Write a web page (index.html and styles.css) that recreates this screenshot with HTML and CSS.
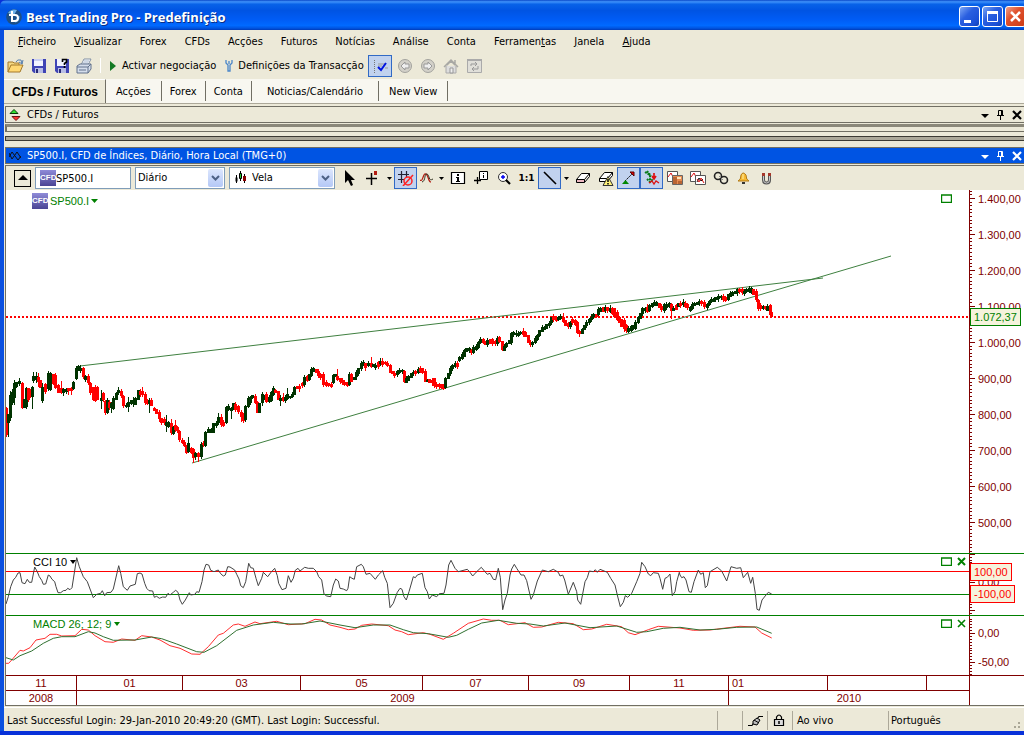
FILE: index.html
```html
<!DOCTYPE html>
<html lang="pt">
<head>
<meta charset="utf-8">
<title>Best Trading Pro - Predefinição</title>
<link rel="stylesheet" href="styles.css">
</head>
<body>
<div class="window">
  <header class="titlebar">
    <svg class="app-icon" viewBox="0 0 16 16" width="16" height="16"><circle cx="8" cy="8" r="7.8" fill="#1d4f86"/><path d="M2 4a7.800 7.800 0 0 1 9-3L8 6Z" fill="#6fb2e8"/><path d="M9 14q5-2 5-7l-3 1Z" fill="#3f8fd6"/><path d="M6 2v10h3a3 3 0 0 0 0-6H3" fill="none" stroke="#fff" stroke-width="2"/></svg>
    <h1 class="title">Best Trading Pro - Predefinição</h1>
    <div class="window-buttons">
      <button class="wbtn" aria-label="Minimizar"><svg width="19" height="19"><path d="M4 13h7v3H4z" fill="#fff"/></svg></button>
      <button class="wbtn" aria-label="Maximizar"><svg width="19" height="19"><path d="M4.500 5.500h10v9h-10zM4 5h11" fill="none" stroke="#fff"/><path d="M4 4h11v3H4z" fill="#fff"/></svg></button>
      <button class="wbtn wbtn-close" aria-label="Fechar"><svg width="19" height="19"><path d="M5 5l9 9M14 5l-9 9" stroke="#fff" stroke-width="2.500"/></svg></button>
    </div>
  </header>
  <div class="frame">
    <nav class="menu">
      <button><u>F</u>icheiro</button><button><u>V</u>isualizar</button><button>Forex</button><button>CFDs</button><button>Acções</button><button>Futuros</button><button>Notícias</button><button>Análise</button><button>Conta</button><button>Ferramen<u>t</u>as</button><button><u>J</u>anela</button><button><u>A</u>juda</button>
    </nav>
    <div class="toolbar">
      <button class="tool" aria-label="Abrir"><svg width="17" height="16"><path d="M1 14V4h5l1 1h5v3" fill="#f5d982" stroke="#a4792a"/><path d="M1 14l3-7h12l-3 7Z" fill="#ffd873" stroke="#a4792a"/><path d="M9 4q1-3 5-2l1 4M12 4l3 2 1-4" fill="none" stroke="#567fae"/></svg></button>
      <button class="tool" aria-label="Guardar"><svg width="16" height="16"><path d="M1 1h14v14H3l-2-2Z" fill="#3f44b5"/><path d="M3 1h9v7H3z" fill="#f1f3ff"/><path d="M3 1h9v2H3z" fill="#c7cdf1"/><path d="M4 10h8v5H4z" fill="#b8bde5"/><path d="M5 11h2v4H5z" fill="#282b77"/></svg></button>
      <button class="tool" aria-label="Guardar como"><svg width="16" height="16"><path d="M1 1h14v14H3l-2-2Z" fill="#3f44b5"/><path d="M3 1h9v7H3z" fill="#f1f3ff"/><path d="M4 10h8v5H4z" fill="#b8bde5"/><path d="M5 11h2v4H5z" fill="#282b77"/><path d="M8.500 4V1.500h4V4L10.500 5.500V7M10.500 8v2" fill="none" stroke="#000" stroke-width="1.600"/></svg></button>
      <button class="tool" aria-label="Imprimir"><svg width="17" height="16"><path d="M5 7l3-6h7l-3 6" fill="#fff" stroke="#8291a5"/><path d="M8 3h5M7 5h5" stroke="#9cb0cb"/><path d="M1 8l3-2h11v5l-3 4H1Z" fill="#d4ddeb" stroke="#62728c"/><path d="M1 9h11l3-3M12 9v6M3 12h7" fill="none" stroke="#62728c"/></svg></button>
      <span class="separator"></span>
      <button class="command"><svg width="9" height="12"><path d="M1 1v10l6-5Z" fill="#147a24"/></svg>Activar negociação</button>
      <button class="command command-wide"><svg width="8" height="12"><path d="M1 0v3l2 2v6h2V5l2-2V0M4 1v3" fill="none" stroke="#4a86c9" stroke-width="1.300"/></svg>Definições da Transacção</button>
      <button class="toggle" aria-label="Confirmar" aria-pressed="true"><svg width="18" height="16"><path d="M3.500 2v13" stroke="#777" stroke-dasharray="1 1"/><path d="M7 6h8M7 8h4M14 10h3" stroke="#999"/><path d="M7 9l3 3 5-7" fill="none" stroke="#0014e0" stroke-width="2"/></svg></button>
      <button class="tool" aria-label="Anterior" disabled><svg width="16" height="16"><circle cx="8" cy="8" r="6.500" fill="#d2d0c8" stroke="#a3a39e"/><path d="M12 6H8V4L4 8l4 4v-2h4Z" fill="#eee" stroke="#999"/></svg></button>
      <button class="tool" aria-label="Seguinte" disabled><svg width="16" height="16"><circle cx="8" cy="8" r="6.500" fill="#d2d0c8" stroke="#a3a39e"/><path d="M4 6h4V4l4 4-4 4v-2H4Z" fill="#eee" stroke="#999"/></svg></button>
      <button class="tool" aria-label="Início" disabled><svg width="16" height="16"><path d="M3 8v7h10V8" fill="#ddd" stroke="#aaa"/><path d="M1 9l7-7 7 7M12 6V2M4 7l4-4 4 4" fill="none" stroke="#a8a8a4" stroke-width="1.500"/><path d="M7 10h3v5H7z" fill="#eee" stroke="#999"/></svg></button>
      <button class="tool" aria-label="Actualizar" disabled><svg width="17" height="16"><path d="M1.500 1.500h14v13h-14z" fill="#e0dfd9" stroke="#aaa"/><path d="M1 2h15" stroke="#aaa" stroke-width="2"/><path d="M5 8V6h6M9 4l2 2-2 2M12 8v3H6M8 9l-2 2 2 2" fill="none" stroke="#999"/></svg></button>
    </div>
    <nav class="tabs">
      <button class="tab tab-active" aria-current="page">CFDs / Futuros</button><button class="tab">Acções</button><button class="tab">Forex</button><button class="tab">Conta</button><button class="tab tab-wide">Noticias/Calendário</button><button class="tab">New View</button>
    </nav>
    <section class="pane-header">
      <svg width="12" height="12"><path d="M1 4.500L5 .500l4 4Z" fill="#2fe02f" stroke="#073807"/><path d="M3 7.500h8l-4 4Z" fill="#f33" stroke="#611"/></svg>
      <h2 class="pane-title">CFDs / Futuros</h2>
      <div class="pane-actions">
        <button aria-label="Opções"><svg width="10" height="10"><path d="M1 4h8L5 8Z" fill="currentColor"/></svg></button>
        <button aria-label="Fixar"><svg width="10" height="10"><path d="M2.500 5V.500h4V5M1 5.500h7M5.500 1v4M4.500 6v4" fill="none" stroke="currentColor"/></svg></button>
        <button aria-label="Fechar painel"><svg width="10" height="10"><path d="M1 1l8 8M9 1L1 9" stroke="currentColor" stroke-width="2.200"/></svg></button>
      </div>
    </section>
    <div class="collapsed"></div>
    <div class="splitter"></div>
    <section class="pane-header pane-selected">
      <svg width="12" height="12"><path d="M0 7l3-5 6 8 3-4M0 3l3 6 5-7 4 6" fill="none" stroke="#111"/></svg>
      <h2 class="pane-title">SP500.I, CFD de Índices, Diário, Hora Local (TMG+0)</h2>
      <div class="pane-actions">
        <button aria-label="Opções"><svg width="10" height="10"><path d="M1 4h8L5 8Z" fill="currentColor"/></svg></button>
        <button aria-label="Fixar"><svg width="10" height="10"><path d="M2.500 5V.500h4V5M1 5.500h7M5.500 1v4M4.500 6v4" fill="none" stroke="currentColor"/></svg></button>
        <button aria-label="Fechar gráfico"><svg width="10" height="10"><path d="M1 1l8 8M9 1L1 9" stroke="currentColor" stroke-width="2.200"/></svg></button>
      </div>
    </section>
    <div class="chart-tools">
      <button class="up" aria-label="Recolher"><svg width="10" height="6"><path d="M0 5h10L5 0Z"/></svg></button>
      <label class="field field-symbol"><span class="cfd">CFD</span><input value="SP500.I" aria-label="Símbolo"></label>
      <label class="field field-period"><select aria-label="Período"><option>Diário</option></select><span class="drop"><svg width="9" height="7"><path d="M1 1l3.500 3.500L8 1" fill="none" stroke="#4d6185" stroke-width="2"/></svg></span></label>
      <label class="field field-style"><svg width="13" height="14"><path d="M2.500 4v8M6.500 0v10M10.500 3v9" stroke="#000"/><path d="M1.500 6.500h2v4h-2z"/><path d="M5.500 2.500h2v5h-2z" fill="#2c3" stroke="#000"/><path d="M9 5h3v5H9z" fill="#800"/></svg><select aria-label="Estilo"><option>Vela</option></select><span class="drop"><svg width="9" height="7"><path d="M1 1l3.500 3.500L8 1" fill="none" stroke="#4d6185" stroke-width="2"/></svg></span></label>
      <div class="buttons">
        <button aria-label="Cursor"><svg width="16" height="16"><path d="M3 0v13l3-3 3 6 2-1-2-5h4Z" fill="#000"/></svg></button>
        <button aria-label="Mira"><svg width="16" height="16"><path d="M6.500 3v12M1 8.500h11" stroke="#000" stroke-width="1.500"/><path d="M9 1h3v4H9z" fill="#b21b10"/></svg></button>
        <button class="caret" aria-label="Opções da mira"><svg width="5" height="3"><path d="M0 0h5L2.500 3Z"/></svg></button>
        <button aria-label="Grelha" aria-pressed="true"><svg width="18" height="16"><path d="M4.500 1v12M9.500 1v6M1 4.500h11M1 9.500h6" stroke="#223" stroke-width="1.200"/><circle cx="11" cy="11" r="4" fill="none" stroke="#f22" stroke-width="1.500"/><path d="M6 16L16 5" stroke="#f22" stroke-width="1.500"/></svg></button>
        <button class="narrow" aria-label="Indicadores"><svg width="14" height="14"><path d="M0 9c3 3 3-8 6-6s2 8 5 8" fill="none" stroke="#b21b10" stroke-width="1.200"/><path d="M2 11c4-1 2-9 5-8s1 8 6 5" fill="none" stroke="#332" /></svg></button>
        <button class="caret" aria-label="Mais indicadores"><svg width="5" height="3"><path d="M0 0h5L2.500 3Z"/></svg></button>
        <button aria-label="Informação"><svg width="16" height="14"><path d="M1.500 1.500h13v11h-13z" fill="#fff" stroke="#000" stroke-width="1.200"/><path d="M7 3h2v2H7zM6 6h3v4h1v1H6v-1h1V7H6z"/></svg></button>
        <button aria-label="Dados"><svg width="16" height="16"><path d="M6.500 1.500h8v8h-8z" fill="#fff" stroke="#000"/><path d="M10 3h1v1h-1zM10 5h1v3h-1z"/><path d="M4.500 7v7M1 10.500h7" stroke="#000" stroke-width="1.300"/></svg></button>
        <button aria-label="Ampliar"><svg width="14" height="14"><circle cx="6" cy="6" r="4.500" fill="#fff" stroke="#333"/><path d="M4 6h4M6 4v4" stroke="#00e" stroke-width="1.400"/><path d="M9 9l4 4" stroke="#000" stroke-width="2.200"/></svg></button>
        <button class="ratio">1:1</button>
        <button aria-label="Linha" aria-pressed="true"><svg width="14" height="14"><path d="M1 1l12 12" stroke="#000" stroke-width="1.600"/></svg></button>
        <button class="caret" aria-label="Mais linhas"><svg width="5" height="3"><path d="M0 0h5L2.500 3Z"/></svg></button>
        <button aria-label="Apagar"><svg width="16" height="14"><path d="M1.500 8.500l5-6h8l-5 6ZM1.500 8.500v3h8v-3M9.500 11.500l5-6v-3" fill="#fff" stroke="#000"/><path d="M2 11h7V9H2Z" fill="#edb8c1"/></svg></button>
        <button aria-label="Apagar tudo"><svg width="16" height="16"><path d="M1.500 8.500l5-6h8l-5 6ZM1.500 8.500v3h8v-3M9.500 11.500l5-6v-3" fill="#fff" stroke="#000"/><path d="M5 15.500l5-9 5 9Z" fill="#fff27a" stroke="#333"/><path d="M10 9v3M10 13v1.500" stroke="#000" stroke-width="1.500"/></svg></button>
        <button aria-label="Tendência" aria-pressed="true"><svg width="16" height="16"><path d="M4 11l7-7" stroke="#000" stroke-dasharray="2 1"/><path d="M9 2h4v4Z" fill="#e00" stroke="#500"/><path d="M1 14h7L4.500 10Z" fill="#080"/></svg></button>
        <button aria-label="Sinais" aria-pressed="true"><svg width="16" height="16"><path d="M1 2l5 3v6M3 1l4 5M3 9l3 3 3-3" fill="none" stroke="#087a1a" stroke-width="2" stroke-dasharray="2 1"/><path d="M10 3v6M8 6l2 3 2-3" fill="none" stroke="#d11" stroke-width="1.700"/><path d="M5 13l3-2 2 3 2-3 3 2" fill="none" stroke="#d11" stroke-width="1.300"/></svg></button>
        <button aria-label="Modelo"><svg width="18" height="16"><path d="M1.500 1.500h10v10h-10z" fill="#fff" stroke="#555"/><path d="M2 7l3-4 2 4" fill="none" stroke="#d11"/><path d="M6.500 5.500h10v9h-10z" fill="#e98b50" stroke="#666"/><path d="M7 7h4v7H7zM12 11h4v3h-4z" fill="#b96534"/><path d="M11 7h4v2h-4z" fill="#ffe4b8"/></svg></button>
        <button aria-label="Copiar gráfico"><svg width="18" height="16"><path d="M1.500 1.500h10v10h-10z" fill="#fff" stroke="#555"/><path d="M2 7l3-4 2 4" fill="none" stroke="#d11"/><path d="M6.500 5.500h10v9h-10z" fill="#fff" stroke="#555"/><path d="M8 12l2-4 2 3 2-2" fill="none" stroke="#111"/><path d="M8 9l2 3 2-4 3 5" fill="none" stroke="#d11"/></svg></button>
        <button aria-label="Ligação"><svg width="16" height="14"><circle cx="5" cy="5" r="3.500" fill="none" stroke="#222" stroke-width="1.600"/><circle cx="11" cy="9" r="3.500" fill="none" stroke="#222" stroke-width="1.600"/><path d="M6 5l4 4" stroke="#888"/></svg></button>
        <button aria-label="Alerta"><svg width="14" height="14"><path d="M1 10q3-1 3-6 2-4 5 0 0 5 3 6Z" fill="#f6b934" stroke="#b37b17"/><path d="M5 11h3v2H5z" fill="#333"/><path d="M6 3v5" stroke="#fff1a8"/></svg></button>
        <button aria-label="Íman"><svg width="12" height="14"><path d="M2.500 2v7q0 3 3 3t3-3V2" fill="none" stroke="#555" stroke-width="3"/><path d="M2.500 4v5q0 3 3 3t3-3V4" fill="none" stroke="#c9c9c9"/><path d="M1 2h3v3H1zM7 2h3v3H7z" fill="#a5372a"/></svg></button>
      </div>
    </div>
    <main class="chart">
      <section class="panel panel-price">
        <div class="plot">
          <div class="price-line"></div>
          <svg class="drawing" id="price" width="962" height="363" viewBox="6 190 962 363">
            <path d="M80 366L823 278M192 463L891 256" stroke="#3f8040" fill="none"/>
          </svg>
          <div class="legend legend-price"><span class="cfd">CFD</span>SP500.I <svg width="7" height="4"><path d="M0 0h7L3.500 4Z"/></svg></div>
          <div class="panel-buttons"><button aria-label="Maximizar painel"><svg width="11" height="9"><path d="M.500 1h10v7.500H.500zM0 1h11" fill="none" stroke="green" stroke-width="1.400"/></svg></button></div>
        </div>
        <div class="axis axis-price">
          <svg class="ticks" id="ticks-price" width="8" height="363"></svg>
          <span>1.400,00</span><span>1.300,00</span><span>1.200,00</span><span>1.100,00</span><span>1.000,00</span><span>900,00</span><span>800,00</span><span>700,00</span><span>600,00</span><span>500,00</span>
          <b class="tag tag-last">1.072,37</b>
        </div>
      </section>
      <section class="panel panel-cci">
        <div class="plot">
          <div class="level level-high"></div><div class="level level-low"></div>
          <svg class="drawing" id="cci" width="962" height="61" viewBox="6 554 962 61"></svg>
          <div class="legend legend-cci">CCI 10 <svg width="6" height="4"><path d="M0 0h6L3 4Z"/></svg></div>
          <div class="panel-buttons"><button aria-label="Maximizar CCI"><svg width="11" height="9"><path d="M.500 1h10v7.500H.500zM0 1h11" fill="none" stroke="green" stroke-width="1.400"/></svg></button><button aria-label="Fechar CCI"><svg width="9" height="9"><path d="M1 1l7 7M8 1L1 8" stroke="green" stroke-width="2"/></svg></button></div>
        </div>
        <div class="axis axis-cci">
          <svg class="ticks" id="ticks-cci" width="8" height="61"></svg>
          <span>0,00</span>
          <b class="tag tag-high">100,00</b><b class="tag tag-low">-100,00</b>
        </div>
      </section>
      <section class="panel panel-macd">
        <div class="plot">
          <svg class="drawing" id="macd" width="962" height="59" viewBox="6 616 962 59"></svg>
          <div class="legend legend-macd">MACD 26; 12; 9 <svg width="6" height="4"><path d="M0 0h6L3 4Z"/></svg></div>
          <div class="panel-buttons"><button aria-label="Maximizar MACD"><svg width="11" height="9"><path d="M.500 1h10v7.500H.500zM0 1h11" fill="none" stroke="green" stroke-width="1.400"/></svg></button><button aria-label="Fechar MACD"><svg width="9" height="9"><path d="M1 1l7 7M8 1L1 8" stroke="green" stroke-width="1.600"/></svg></button></div>
        </div>
        <div class="axis axis-macd">
          <svg class="ticks" id="ticks-macd" width="8" height="59"></svg>
          <span>0,00</span><span>-50,00</span>
        </div>
      </section>
      <section class="timeline">
        <div class="dates">
          <div class="months"><span>11</span><span>01</span><span>03</span><span>05</span><span>07</span><span>09</span><span>11</span><span class="start">01</span><span></span><span></span></div>
          <div class="years"><span>2008</span><span>2009</span><span>2010</span></div>
        </div>
        <div class="axis"></div>
      </section>
    </main>
    <footer class="status">
      <p class="status-text">Last Successful Login: 29-Jan-2010 20:49:20 (GMT). Last Login: Successful.</p>
      <span class="cell cell-icon"></span>
      <span class="cell cell-icon"><svg width="16" height="12"><path d="M0 10.500h4l2-3M15 1.500h-4L9 4" fill="none" stroke="#000" stroke-width="1.200"/><path d="M5 6l4-3 3 2-3 5-4-1Z" fill="#bbb" stroke="#000"/><path d="M6 5l5 3" stroke="#000"/></svg></span>
      <span class="cell cell-icon"><svg width="12" height="13"><path d="M3.500 6V3q2.500-4 5 0v3" fill="none" stroke="#000" stroke-width="1.200"/><path d="M1.500 5.500h9v6h-9z" fill="#ddd" stroke="#000" stroke-width="1.200"/><path d="M6 7v3" stroke="#000" stroke-width="1.500"/></svg></span>
      <span class="cell cell-live">Ao vivo</span>
      <span class="cell cell-language">Português</span>
      <svg class="grip" width="8" height="11"><path d="M0 9h2v2H0zM4 9h2v2H4zM4 5h2v2H4zM8 1h2v2H8z" fill="#aaa797"/></svg>
    </footer>
  </div>
</div>
<script src="chart.js"></script>
</body>
</html>
```
FILE: styles.css
```css
* { box-sizing: border-box; }
body { margin: 0; font: 11px/14px "DejaVu Sans Condensed", "DejaVu Sans", sans-serif; font-stretch: condensed; color: #000; overflow: hidden; }
button, input, select { font: inherit; color: inherit; font-stretch: inherit; margin: 0; padding: 0; border: 0; background: none; border-radius: 0; }
svg { display: block; flex: none; }
h1, h2, p { margin: 0; }

.window { display: flex; flex-direction: column; height: 100vh; background: #0831d9; overflow: hidden; }
.titlebar { display: flex; align-items: center; height: 30px; padding: 3px 0 0 6px; flex: none; border-radius: 6px 0 0 0; background: linear-gradient(#0a48c8, #3f92fb 6%, #0862e8 14%, #0054e3 35%, #005cf5 65%, #006aff 85%, #0054e0 94%, #003bb8); }
.title { margin-left: 4px; color: #fff; font: bold 13px/20px "Open Sans", sans-serif; text-shadow: 1px 1px #0a2f86; white-space: nowrap; }
.window-buttons { display: flex; gap: 2px; margin-left: auto; margin-right: -2px; }
.wbtn { width: 21px; height: 21px; padding: 0; border: 1px solid #fff; border-radius: 3px; background: linear-gradient(135deg, #7da7f5, #2a5fe0 40%, #1a4fd6 80%, #123fae); }
.wbtn-close { background: linear-gradient(135deg, #f0a08a, #e0512d 40%, #cc3b14); }

.frame { display: flex; flex-direction: column; flex: 1; min-height: 0; margin-bottom: 4px; border-left: 4px solid #0a50e0; background: #ece9d8; border-bottom: 0; }
.menu { display: flex; gap: 18px; height: 24px; padding-left: 14px; align-items: center; flex: none; }
.toolbar { display: flex; height: 25px; align-items: center; padding: 0 0 2px; flex: none; white-space: nowrap; }
.tool { display: flex; width: 23px; height: 22px; align-items: center; justify-content: center; }
.separator { width: 1px; height: 15px; margin: 0 8px 0 4px; background: #b8b5a4; border-right: 1px solid #fff; }
.command { display: flex; align-items: center; gap: 4px; margin-right: 9px; }
.command-wide { gap: 5px; margin-right: 4px; }
.toggle { display: flex; width: 24px; height: 22px; margin-right: 2px; align-items: center; justify-content: center; border: 1px solid #316ac5; background: #c1d2ee; }

.tabs { display: flex; height: 25px; flex: none; background: #f8f7f0; border-bottom: 1px solid #aca899; align-items: center; }
.tab { height: 20px; padding: 2px 8px 0; border-right: 1px solid #716f64; white-space: nowrap; }
.tab-active { height: 24px; padding: 0 7px 0 8px; background: #ece9d8; font: bold 12px/24px "Liberation Sans", Arial, sans-serif; border-top: 1px solid #fff; }
.tab-active + .tab { padding: 2px 10px 0; }
.tab-wide { padding: 2px 15px 0; }
.tab:last-child { padding: 2px 10px 0; }

.pane-header { display: flex; align-items: center; height: 17px; margin: 2px 0 0 1px; padding: 0 2px 0 3px; flex: none; border: 1px solid #716f64; border-right: 0; }
.pane-selected { margin-top: 6px; background: #0054e3; color: #fff; }
.pane-title { margin-left: 6px; font-size: 11px; font-weight: normal; }
.pane-actions { display: flex; gap: 6px; margin-left: auto; }
.collapsed { height: 8px; margin: 1px 0 0 1px; flex: none; border: 2px solid #716f64; border-top: 3px solid #8b887a; border-right: 0; border-bottom: 1px solid #716f64; }
.splitter { height: 5px; margin: 4px 0 0 1px; flex: none; border: 1px solid #3c3a33; border-right: 0; background: #aca899; }

.chart-tools { display: flex; align-items: center; height: 25px; margin: 1px 0 0 1px; padding: 0 0 0 8px; flex: none; border-top: 1px solid #716f64; border-left: 1px solid #716f64; }
.up { display: flex; width: 17px; height: 17px; align-items: center; justify-content: center; border: 1px solid #000; margin-right: 4px; }
.field { display: flex; position: relative; align-items: center; height: 22px; margin-right: 4px; border: 1px solid #7f9db9; background: #fff; }
.field-symbol { width: 96px; padding-left: 4px; }
.field-period { width: 90px; padding-left: 2px; }
.field-style { width: 106px; padding-left: 4px; }
.field input, .field select { flex: 1; min-width: 0; height: 18px; outline: 0; appearance: none; }
.field-style select { padding-left: 5px; }
.drop { position: absolute; top: 1px; right: 1px; bottom: 1px; width: 15px; display: flex; align-items: center; justify-content: center; border-radius: 2px; background: linear-gradient(#dce6fd, #b4c8f6); pointer-events: none; }
.cfd { width: 16px; height: 16px; flex: none; overflow: hidden; background: linear-gradient(#8f8bd8, #4a4494); color: #fff; font: bold 8px/15px "Liberation Sans", Arial, sans-serif; text-align: center; }
.buttons { display: flex; flex: 1; height: 22px; margin-left: -1px; min-width: 0; }
.buttons button { display: flex; flex: none; width: 23px; align-items: center; justify-content: center; border: 1px solid transparent; }
.buttons .caret { width: 10px; }
.buttons .narrow { width: 19px; }
.buttons .ratio { font: bold 9px/14px "DejaVu Sans", sans-serif; }
.buttons button[aria-pressed="true"] { border-color: #316ac5; background: #c1d2ee; }

.chart { display: flex; flex-direction: column; flex: 1; min-height: 0; margin-left: 1px; border-left: 1px solid #716f64; border-bottom: 1px solid #716f64; background: #fff; font: 11px/14px "Liberation Sans", Arial, sans-serif; }
.panel { display: flex; position: relative; border-bottom: 1px solid green; }
.panel-price { flex: 1; min-height: 0; }
.panel-macd { border-bottom: 0; }
.plot { flex: 1; min-width: 0; position: relative; overflow: hidden; }
.drawing { position: relative; }
.price-line { position: absolute; top: 126px; left: 0; right: 0; height: 2px; background: repeating-linear-gradient(90deg, red 0 2px, transparent 2px 4px); }
.level { position: absolute; left: 0; right: 0; height: 1px; }
.level-high { top: 17px; background: red; }
.level-low { top: 40px; background: green; }
.legend { position: absolute; display: flex; align-items: center; gap: 3px; left: 27px; top: 1px; color: green; fill: green; }
.legend-price { left: 26px; top: 3px; gap: 2px; }
.legend-cci { color: #000; fill: #000; }
.panel-buttons { position: absolute; display: flex; gap: 5px; top: 3px; right: 3px; align-items: center; }
.panel-price .panel-buttons { top: 4px; right: 17px; }
.axis { position: relative; width: 55px; flex: none; border-left: 1px solid maroon; color: maroon; overflow: hidden; }
.axis span { display: block; padding-left: 8px; line-height: 36px; }
.ticks { position: absolute; left: 0; top: 0; }
.axis-price span:nth-of-type(1) { margin-top: -9px; }
.axis-cci span { padding-top: 10px; }
.axis-macd span { line-height: 29px; }
.axis-macd span:nth-of-type(1) { padding-top: 3px; }
.axis-macd span:nth-of-type(2) { margin-bottom: -2px; }
.tag { position: absolute; left: 0; padding: 1px 3px 1px 3px; border: 1px solid red; background: #f5f3dc; color: red; font-weight: normal; line-height: 14px; }
.tag-last { top: 118px; border-color: green; color: green; }
.tag-high { top: 9px; }
.tag-low { top: 31px; }

.timeline { display: flex; border-top: 1px solid maroon; color: maroon; }
.dates { flex: 1; min-width: 0; }
.months, .years { display: flex; height: 15px; line-height: 15px; text-align: center; }
.months { border-bottom: 1px solid maroon; }
.months span, .years span { flex: none; border-right: 1px solid maroon; }
.years { height: 14px; }
.months span:nth-child(1), .years span:nth-child(1) { width: 71px; }
.months span:nth-child(2), .months span:nth-child(5) { width: 106px; }
.months span:nth-child(3) { width: 118px; }
.months span:nth-child(4) { width: 122px; }
.months span:nth-child(6) { width: 101px; }
.months span:nth-child(n+7) { width: 99px; }
.months .start { text-align: left; padding-left: 3px; }
.years span:nth-child(2) { width: 652px; }
.months span:last-child, .years span:last-child { flex: 1; width: auto; border: 0; }

.status { display: flex; align-items: center; height: 24px; margin-top: 1px; padding-top: 2px; flex: none; border-top: 1px solid #fff; white-space: nowrap; }
.status-text { flex: 1; padding-left: 3px; overflow: hidden; }
.cell { display: flex; align-items: center; height: 19px; padding-left: 5px; border-left: 1px solid #aca899; }
.cell-icon { width: 25px; }
.cell-live { width: 96px; padding-left: 4px; }
.cell-language { width: 126px; padding-left: 2px; }
.grip { align-self: flex-end; margin: 0 2px 3px 0; }
```
FILE: chart.js
```js
const NS = "http://www.w3.org/2000/svg";

function addPath(parent, d, stroke, width) {
  const path = document.createElementNS(NS, "path");
  path.setAttribute("d", d);
  path.setAttribute("fill", "none");
  path.setAttribute("stroke", stroke);
  path.setAttribute("stroke-width", width);
  parent.appendChild(path);
  return path;
}

// Candles: direction letter, x, body top, body bottom, optional wick top and bottom (1/3 px units).
const candles = [
  { x: 0, y: 340, data: "R19 205 285 200 290,D24 222 250 222 290,D31 165 235 152 242,D37 155 190,D42 130 175 120 195,D49 126 140,D57 122 133 115 138,R65 128 205,D72 178 205,D78 145 200,R84 145 180,R90 155 170,D95 140 170 138 206,D100 108 122 95 130,D107 108 120 97 130,R115 112 125 98 140,R121 120 145,D127 140 182 130 188,R135 132 155,D143 100 148,D151 100 150,R159 103 132,R166 104 145,R174 135 158,R182 145 158 122 162,D190 148 160,D197 146 156,R205 143 152 143 165,R213 145 152 140 165,D220 125 148,D227 83 118,D234 78 92,D241 83 92 75 98,R250 85 110,D256 107 120,R263 108 130,R271 130 160,R278 142 180,R285 142 184,R292 142 180,D302 175 182 150 207,R308 160 180,R314 182 220,D320 180 218,R327 185 205,D334 190 205 185 220,D340 175 207,D347 160 180,D354 150 160 140 165,R362 152 168,R369 168 198,D377 195 200,D385 185 200 172 215,D392 180 192,D400 182 188 170 200,D406 175 195,D413 150 180,R420 153 165,R427 153 165 140 170,R434 163 190,R440 180 192,D447 180 192 175 218,R454 180 197,R462 205 213,R469 207 222,R476 215 238,R484 235 248,R491 238 250,D497 245 258 225 275,D505 245 262,R512 250 280 238 285,D518 262 283,R524 255 270 240 275,R531 262 272,R538 272 300,R545 300 308,R552 305 318,R558 315 340,D565 310 335 292 340,R572 325 340,R579 328 355 325 370,D586 340 352,R595 338 352 335 365,D602 312 352,R608 308 316,D616 275 318,D623 268 278,D632 268 278,D640 250 278,D647 248 258,D655 232 250 220 255,R662 230 255,R670 245 258,D677 200 250,D685 198 210,D692 203 212 200 237,D699 190 210,R706 192 210,R713 198 215" },
  { x: 240, y: 300, data: "R3 335 350 330 367,R10 345 362,D16 318 360,D23 295 320,D30 292 310,D37 285 295,R44 288 310,R51 305 338,D58 308 338,D65 282 310,D72 288 295,R79 283 305,D86 290 305,D92 275 303,D99 265 285,R106 270 278,R113 272 300,D120 295 303 285 318,R128 292 303 280 306,D134 292 303,D142 282 297 265 300,D149 288 295,D156 282 292,D163 262 285,R170 257 268,R178 257 268,R185 248 258,D192 232 255,R200 228 242,D207 223 240,D213 208 228,D220 205 215,R227 207 218,R234 212 228,R241 222 235,R250 223 255,R257 245 257,R264 250 257,R272 252 262,D278 225 250,D285 222 232,R292 228 240 207 244,R299 235 247,R306 240 250,R313 245 255,R320 247 258,D327 222 255,R334 222 245,D341 230 240,D348 215 232,D355 205 222,D362 190 207,D369 185 195,R376 190 205 188 212,D385 190 198,R392 190 200 172 203,D399 192 200,D406 195 203,R413 185 200,D420 182 192,R427 182 195 175 200,R434 185 193,R441 188 198,R449 195 218,R456 213 222,R463 218 228,D470 212 225,D477 210 218,D485 210 217,R491 212 245,D498 235 248,D505 228 243,D512 218 235,D519 215 222,R526 213 222,D533 208 218,R540 203 215,R547 205 218,R554 213 245,D561 240 246,R568 238 248,R575 240 250,R582 235 257,R589 252 262,R596 253 262,R603 253 265,R610 257 267,D616 235 265,D623 220 237,D630 203 222,D637 195 207,D644 190 200,R651 188 202,D658 170 182,D665 162 177,D672 150 170,D679 145 155,D686 145 152,R693 150 160,D700 142 158,D707 137 150,D714 125 145,D721 117 130,R728 118 130,R735 123 135,D742 120 135" },
  { x: 490, y: 240, data: "R0 298 312,R7 298 312,R14 303 312,D21 295 312,R28 292 305,R35 303 330,D42 318 332,D49 308 322,D56 300 313,D63 280 308,D70 275 285,D77 278 285,D84 278 288,D91 275 283,R98 272 285 265 290,R105 275 290,R113 285 310,R120 305 315,D127 305 315,D134 295 308,D141 285 300,D148 270 288,D155 262 275,D162 260 270,D169 252 268,D176 248 258,D183 232 250,R190 228 240,R197 232 242,D204 230 240,D211 228 238,R219 230 245 220 248,R226 240 258,R233 250 260,D240 245 262,R247 238 250,R254 240 255,R261 245 278,R268 272 282 270 291,D275 268 282,D282 255 270,D289 245 258,D296 237 248,D303 230 240,D310 222 232,R317 222 232,D324 208 225,D331 205 215,R338 202 215,D345 200 212,R352 202 212,D359 203 215,R366 205 222,R373 205 230,R380 215 240,R387 230 248,R394 237 260,R401 240 268,R408 255 272,D415 265 275,D422 258 272,D429 255 268,D436 245 268,D443 232 250,D450 220 238,D457 205 222,D464 203 212,R471 200 215,D478 195 212,D485 190 200,D492 187 197,D499 187 197,R506 188 205,R513 198 210,D522 192 212,D529 192 205,D536 190 200,R543 192 212 188 237,D550 205 212,R557 195 210,D564 190 202,R571 188 198,D578 185 195 178 200,R585 190 200,R592 193 205,D599 200 212,D606 193 208,D613 190 198,D620 185 195,D627 183 190,R634 183 192,R641 187 202,D650 192 205,D657 182 195,D664 178 187,D671 175 185,D678 172 180,D685 168 178,D692 167 175,R699 168 180,R706 172 183,D713 163 180,D720 160 170,D727 157 167,D734 153 163,D741 148 160,R748 147 157,R755 147 160,D762 152 163,D769 146 155,D776 145 157,D783 145 160,R790 148 165,R797 152 180,R804 180 208,R811 195 208,D818 198 207,R825 198 207,D832 198 212,R839 195 225,R844 215 230" }
];

const price = document.getElementById("price");
candles.forEach(group => {
  group.data.split(",").forEach((row, i) => {
    const color = row[0] === "D" ? "#003300" : "#ff0000";
    const [cx, top, bottom, high, low] = row.slice(1).split(" ").map(Number);
    const x = Math.round(group.x + cx / 3) + 0.5;
    const y = v => Math.round(group.y + v / 3);
    const wickTop = high || top - (i * 5) % 8;
    const wickBottom = low || bottom + (i * 7) % 8;
    addPath(price, `M${x} ${y(wickTop)}V${y(wickBottom)}`, color, 1);
    addPath(price, `M${x} ${y(top)}V${y(bottom)}`, color, 3);
  });
});

// Indicator series: x, y pairs in 1/3 px units from each section's left edge.
function series(svg, color, sections) {
  const points = sections.flatMap((text, i) => text.split(" ").map(p => {
    const [x, y] = p.split(",").map(Number);
    return `${(i * 340 + x / 3).toFixed(1)} ${(545 + y / 3).toFixed(1)}`;
  }));
  addPath(document.getElementById(svg), "M" + points.join("L"), color, 1);
}

series("cci", "#444", [
  "18,177 25,155 32,125 40,105 47,97 54,84 60,83 66,113 75,116 82,103 88,112 95,112 104,66 112,80 118,95 125,106 130,118 137,117 145,90 150,93 156,103 164,110 168,125 174,143 182,143 190,137 198,136 203,130 210,134 216,128 230,38 238,65 250,95 262,110 280,158 290,148 302,145 307,137 314,152 320,143 333,142 340,132 356,62 362,85 370,125 382,136 390,123 406,118 412,86 420,84 426,87 434,115 440,130 447,137 458,138 463,157 470,154 478,160 488,156 497,157 504,145 510,150 520,142 527,136 534,142 540,165 547,178 556,165 568,143 572,150 585,148 590,140 597,142 606,110 612,75 618,58 626,60 632,76 642,80 655,75 662,86 670,93 676,90 683,65 690,66 704,75 710,88 717,102 722,122 730,128 737,110 746,55 752,68 760,70 768,100 775,122 785,100 790,82 803,95 812,83 824,70 832,92 836,115 846,134 858,130 865,92 873,112 880,100 886,76 894,70 900,78 914,67 925,70 940,70 950,80 956,95 965,105 972,147 980,153 992,155 1000,120 1007,102 1015,108",
  "0,130 10,132 20,137 24,130 29,95 36,100 43,103 50,65 64,58 70,65 78,88 90,85 106,103 115,90 128,77 134,97 142,115 150,188 160,175 172,142 180,130 186,133 192,155 199,165 207,140 220,95 226,98 232,90 247,85 255,128 262,140 268,162 277,150 290,155 298,146 312,145 318,120 326,60 333,46 345,70 355,80 382,73 390,82 398,93 410,80 424,67 435,80 442,88 450,85 460,103 467,104 475,70 481,97 488,194 495,165 502,145 510,90 515,72 523,58 530,70 543,90 552,90 560,107 573,163 580,150 592,108 607,75 625,80 640,73 655,82 660,93 668,90 674,105 685,148 700,112 710,140 713,165 722,178 735,110 742,98 748,78 760,80 766,74 772,82 780,73 802,82 812,100 825,120 832,150 841,185 850,172 856,152 863,157 875,145 890,110 900,85 905,52 915,65 925,87 932,92 940,83 955,85 960,100 968,133 975,100 982,97 990,87 997,152 1005,140 1010,110 1018,82",
  "0,90 5,98 12,95 18,105 27,140 34,142 42,110 55,75 62,88 70,83 76,128 82,122 90,80 112,67 125,78 140,108 153,65 170,70 182,68 190,98 203,82 212,115 218,97 226,145 231,193 238,196 246,165 258,150 265,142 275,147"
]);
series("macd", "#ff3030", [
  "18,355 26,355 35,345 60,316 70,318 90,308 108,285 135,280 150,268 170,268 185,273 225,272 245,253 265,255 285,272 315,290 340,292 365,282 405,286 425,272 455,276 480,285 510,302 540,310 575,327 600,328 625,305 655,270 670,265 700,240 715,237 735,244 765,231 780,236 830,229 865,239 915,236 945,223 965,225 990,240",
  "0,247 25,254 45,252 65,241 95,237 145,242 165,255 185,260 205,269 250,263 270,268 310,283 340,265 385,235 430,222 455,226 480,226 505,239 555,233 580,247 605,246 655,232 700,236 730,254 755,252 800,238 845,245 865,263 885,269 925,254 955,244",
  "0,249 40,256 90,255 130,250 180,244 225,246 245,264 275,279"
]);
series("macd", "#2f7030", [
  "18,338 40,345 60,332 95,318 130,295 160,280 185,275 225,275 265,260 285,264 310,275 340,286 405,285 455,276 485,281 530,297 590,320 612,322 650,302 710,256 760,240 820,232 870,237 905,237 960,228",
  "0,240 45,248 100,240 150,240 190,254 220,263 265,266 325,277 350,271 385,253 425,234 475,226 530,235 570,237 610,243 675,234 750,248 830,243 890,262 920,260 970,250",
  "0,247 60,255 110,253 170,247 230,246 275,265"
]);

// Scale marks: first major mark, spacing of minor marks, minor marks per major.
function ticks(id, height, zero, step, per) {
  let d = "";
  for (let n = -Math.floor(zero / step); zero + n * step < height; n++) {
    d += `M0 ${Math.round(zero + n * step) + 0.5}h${n % per === 0 ? 5 : 2}`;
  }
  addPath(document.getElementById(id), d, "maroon", 1);
}
ticks("ticks-price", 363, 8, 3.6, 10);
ticks("ticks-cci", 61, 28, 2.8, 10);
ticks("ticks-macd", 59, 17, 2.9, 10);
```
